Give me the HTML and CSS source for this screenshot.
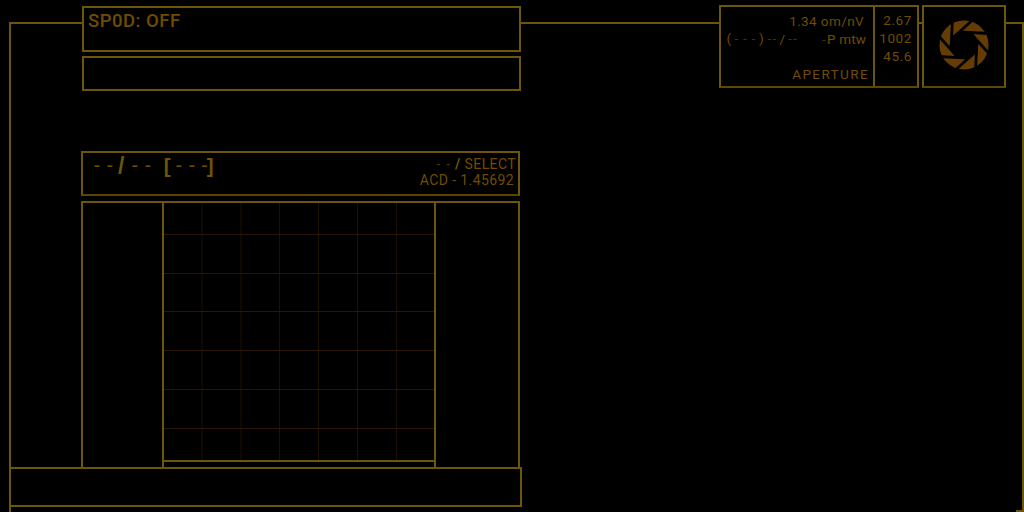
FILE: index.html
```html
<!DOCTYPE html>
<html lang="en">
<head>
<meta charset="utf-8">
<title>Aperture console</title>
<link rel="stylesheet" href="styles.css">
</head>
<body>
<div class="frame">
  <header class="header">
    <div class="status-column">
      <div class="box status"><span class="status-text">SP0D: OFF</span></div>
      <div class="box blank"></div>
    </div>
    <div class="readout">
      <div class="readout-main">
        <div class="rate">1.34 om/nV</div>
        <svg class="signal" width="152" height="18" viewBox="721 30 152 18">
          <text x="726.5" y="43">(</text>
          <text class="dim" x="734.5 743 751.5" y="43">---</text>
          <text x="759" y="43">)</text>
          <text class="dim" x="767.5 772.5" y="43">--</text>
          <text x="779.5" y="44">/</text>
          <text class="dim" x="788 793" y="43">--</text>
          <text class="dim" x="822" y="43.5">-</text>
          <text class="unit" x="827" y="44" textLength="39">P mtw</text>
        </svg>
        <div class="brand">APERTURE</div>
      </div>
      <div class="readout-side"><span>2.67</span><span>1002</span><span>45.6</span></div>
    </div>
    <div class="box logo">
      <svg width="50" height="50" viewBox="-25 -25 50 50">
        <defs><path id="slit" d="M-12.8 5V-27"/></defs>
        <circle class="ring" r="19.3"/>
        <g class="slits" transform="rotate(3)">
          <use href="#slit"/>
          <use href="#slit" transform="rotate(45)"/>
          <use href="#slit" transform="rotate(90)"/>
          <use href="#slit" transform="rotate(135)"/>
          <use href="#slit" transform="rotate(180)"/>
          <use href="#slit" transform="rotate(225)"/>
          <use href="#slit" transform="rotate(270)"/>
          <use href="#slit" transform="rotate(315)"/>
        </g>
      </svg>
    </div>
  </header>
  <main>
    <section class="box selector">
      <svg class="code" width="132" height="28" viewBox="83 153 132 28">
        <text x="93.5 106.5" y="172">--</text>
        <text class="strong slash" x="118" y="174">/</text>
        <text x="131.5 144.5" y="172">--</text>
        <text class="strong" x="163.8" y="173">[</text>
        <text x="175.5 188.5 201" y="172">---</text>
        <text class="strong" x="206.8" y="173">]</text>
      </svg>
      <div class="select">
        <div class="select-mode"><span class="dim">- -</span> <b>/</b> SELECT</div>
        <div class="select-value">ACD - 1.45692</div>
      </div>
    </section>
    <section class="scope">
      <div class="plot">
        <svg width="270" height="257" viewBox="0 0 270 257">
          <path class="cols" d="M38 0V258M77 0V258M115.500 0V258M154.500 0V258M193.500 0V258M232.500 0V258"/>
          <path class="rows" d="M0 31.500H270M0 70.500H270M0 108.500H270M0 147.500H270M0 186.500H270M0 225.500H270"/>
        </svg>
      </div>
    </section>
  </main>
  <footer class="box footer"></footer>
  <i class="corner"></i>
</div>
</body>
</html>
```
FILE: styles.css
```css
* { box-sizing: border-box; }
:root { --line: #6c5607; --text: #704c00; }
body {
  margin: 0;
  width: 1024px;
  height: 512px;
  padding: 22px 0 0 9px;
  overflow: hidden;
  background: #000;
  color: var(--text);
  font-family: Roboto, "Liberation Sans", sans-serif;
}
.frame {
  position: relative;
  width: 1015px;
  height: 490px;
  border: 2px solid var(--line);
  border-bottom: 0;
}
.box { border: 2px solid var(--line); background: #000; }
.header {
  display: flex;
  height: 86px;
  margin: -19px 0 0 71px;
}
.status-column {
  display: flex;
  flex-direction: column;
  gap: 4px;
  width: 439px;
  padding-top: 1px;
}
.status {
  height: 46px;
  padding: 2px 0 0 4px;
  font-size: 18.5px;
  font-weight: 500;
  line-height: 22px;
}
.blank { height: 35px; }
.status-text { letter-spacing: 0.5px; }
.readout {
  display: flex;
  width: 200px;
  height: 83px;
  margin-left: 198px;
  border: 2px solid var(--line);
  border-bottom-color: #5c4706;
  background: #000;
  font-size: 14px;
  line-height: 18px;
}
.readout-main {
  width: 154px;
  border-right: 2px solid var(--line);
  padding-top: 5px;
  text-align: right;
}
.rate { padding-right: 9px; font-size: 13.5px; letter-spacing: 0.4px; }
.signal { display: block; fill: var(--text); font-size: 13.5px; }
.signal .dim { fill: #4a3100; }
.brand { padding: 17px 4px 0 0; font-size: 13.5px; letter-spacing: 1.4px; }
.readout-side {
  display: flex;
  flex-direction: column;
  width: 42px;
  padding: 4px 5px 0 0;
  text-align: right;
  font-size: 13.5px;
  letter-spacing: 0.6px;
}
.logo {
  display: flex;
  align-items: center;
  justify-content: center;
  width: 84px;
  height: 83px;
  margin-left: 3px;
  padding-bottom: 3px;
  border-bottom-color: #5c4706;
}
.ring { fill: none; stroke: #653d04; stroke-width: 10.5; }
.slits { stroke: #000; stroke-width: 2.8; }
.selector {
  display: flex;
  justify-content: space-between;
  width: 439px;
  height: 45px;
  margin: 60px 0 0 70px;
  border-bottom-color: #594405;
}
.code { fill: var(--text); font-family: "Liberation Sans", sans-serif; font-size: 20px; }
.strong { fill: var(--line); font-size: 20.5px; font-weight: 700; }
.strong.slash { font-size: 23px; }
.select {
  padding: 3px 2px 0 0;
  text-align: right;
  font-size: 14px;
  line-height: 16px;
  letter-spacing: 0.4px;
}
.select-value { padding-right: 2px; }
.select-mode .dim { letter-spacing: 1.2px; }
.select b { color: var(--line); }
.dim { color: #4a3100; }
.scope {
  display: flex;
  width: 439px;
  height: 266px;
  margin: 5px 0 0 70px;
  border: 2px solid var(--line);
  border-bottom: 0;
}
.plot {
  width: 274px;
  height: 264px;
  margin-left: 79px;
  border: solid var(--line);
  border-width: 0 2px;
}
.plot svg { display: block; border-bottom: 2px solid var(--line); box-sizing: content-box; }
.cols { stroke: #1f1100; }
.rows { stroke: #2b1600; }
.footer { width: 513px; height: 40px; margin-left: -2px; }
.corner {
  position: absolute;
  right: 0;
  bottom: 0;
  width: 6px;
  height: 2px;
  background: var(--line);
}
```
